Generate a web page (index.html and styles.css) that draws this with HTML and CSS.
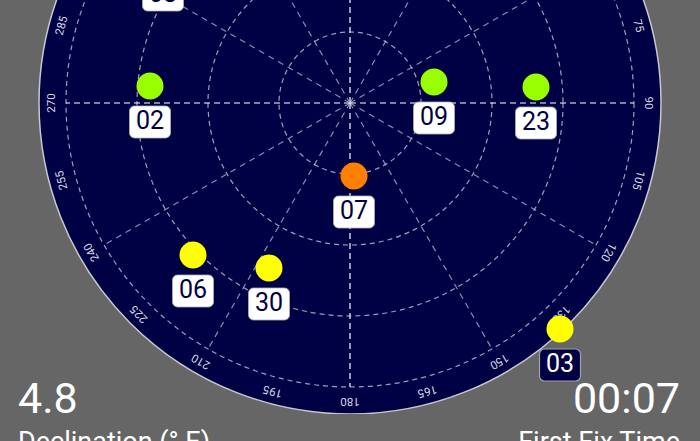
FILE: index.html
```html
<!doctype html>
<html lang="en">
  <head>
    <meta charset="UTF-8" />
    <meta name="viewport" content="width=device-width, initial-scale=1.0" />
    <title>Sky View</title>
    <link rel="stylesheet" href="styles.css">
  </head>
  <body>
    <div class="sky">
      <svg id="skyplot" width="700" height="622" viewBox="-350 -311 700 622">
        <circle class="horizon" cx="0" cy="0" r="311" />
        <g id="grid"></g>
        <g id="azimuths"></g>
        <g id="sats"></g>
      </svg>
    </div>

    <div class="stats">
      <div class="stat">
        <span class="stat-value">4.8</span>
        <span class="stat-label">Declination (° E)</span>
      </div>
      <div class="stat stat-right">
        <span class="stat-value">00:07</span>
        <span class="stat-label">First Fix Time</span>
      </div>
    </div>

    <script>
      const NS = "http://www.w3.org/2000/svg";
      const grid = document.getElementById("grid");
      const azimuths = document.getElementById("azimuths");
      const sats = document.getElementById("sats");

      function el(name, attrs, parent) {
        const node = document.createElementNS(NS, name);
        for (const key in attrs) node.setAttribute(key, attrs[key]);
        parent.appendChild(node);
        return node;
      }

      // elevation rings
      [71, 142, 213, 284].forEach((r) => {
        el("circle", { cx: 0, cy: 0, r: r, class: "ring" }, grid);
      });

      // azimuth spokes every 30 degrees
      for (let a = 0; a < 360; a += 30) {
        const rad = (a * Math.PI) / 180;
        el("line", {
          x1: 0,
          y1: 0,
          x2: (284 * Math.sin(rad)).toFixed(1),
          y2: (-284 * Math.cos(rad)).toFixed(1),
          class: a % 90 === 0 ? "spoke spoke-main" : "spoke",
        }, grid);
      }

      // azimuth labels every 15 degrees (the top of the plot is scrolled off screen)
      for (let a = 75; a <= 285; a += 15) {
        const t = el("text", {
          x: 0,
          y: -298,
          transform: `rotate(${a})`,
          class: "azimuth",
        }, azimuths);
        t.textContent = a;
      }

      const satellites = [
        { id: "08", x: -187, y: -144, color: "#99ff00" },
        { id: "02", x: -200, y: -17, color: "#99ff00" },
        { id: "09", x: 84, y: -21, color: "#99ff00" },
        { id: "23", x: 186, y: -16, color: "#99ff00" },
        { id: "07", x: 4, y: 73, color: "#ff7f00" },
        { id: "06", x: -157, y: 152, color: "#ffff00" },
        { id: "30", x: -81, y: 165, color: "#ffff00" },
        { id: "03", x: 210, y: 226, color: "#ffff00", outside: true },
      ];

      satellites.forEach((s) => {
        const g = el("g", { class: s.outside ? "sat sat-outside" : "sat" }, sats);
        el("circle", { cx: s.x, cy: s.y, r: 13.5, fill: s.color }, g);
        el("rect", {
          x: s.x - 20.5,
          y: s.y + 20,
          width: 41,
          height: 32,
          rx: 5,
          class: "sat-box",
        }, g);
        const t = el("text", { x: s.x, y: s.y + 36.5, class: "sat-id" }, g);
        t.textContent = s.id;
      });
    </script>
  </body>
</html>
```

FILE: styles.css
```css
html,
body {
  margin: 0;
  height: 100%;
}
body {
  background: #666666;
  color: #ffffff;
  font-family: Roboto, "Noto Sans", sans-serif;
  overflow: hidden;
}
.sky {
  display: flex;
  justify-content: center;
  margin-top: -208px;
}
#skyplot {
  display: block;
}
.horizon {
  fill: #000044;
  stroke: #c8c8d0;
  stroke-width: 1.5;
}
.ring {
  fill: none;
  stroke: rgba(210, 210, 230, 0.75);
  stroke-width: 1.2;
  stroke-dasharray: 5 4;
}
.spoke {
  stroke: rgba(200, 200, 225, 0.7);
  stroke-width: 1.2;
  stroke-dasharray: 6 5;
}
.spoke-main {
  stroke: #ffffff;
  stroke-dasharray: 6 4;
}
.azimuth {
  fill: #d8d8e0;
  font-size: 11.5px;
  text-anchor: middle;
  dominant-baseline: middle;
}
.sat-box {
  fill: #ffffff;
  stroke: #b0b0b8;
  stroke-width: 0.8;
}
.sat-id {
  fill: #000044;
  font-size: 25px;
  text-anchor: middle;
  dominant-baseline: middle;
}
.sat-outside .sat-box {
  fill: #000044;
  stroke: #a0a0a8;
  stroke-width: 1.2;
}
.sat-outside .sat-id {
  fill: #ffffff;
}
.stats {
  display: flex;
  justify-content: space-between;
  padding: 0 20px 0 18px;
  margin-top: -37px;
}
.stat {
  display: flex;
  flex-direction: column;
}
.stat-right {
  align-items: flex-end;
}
.stat-value {
  font-size: 43px;
  line-height: 1;
}
.stat-label {
  font-size: 27px;
  line-height: 1;
  margin-top: 9px;
}
```
